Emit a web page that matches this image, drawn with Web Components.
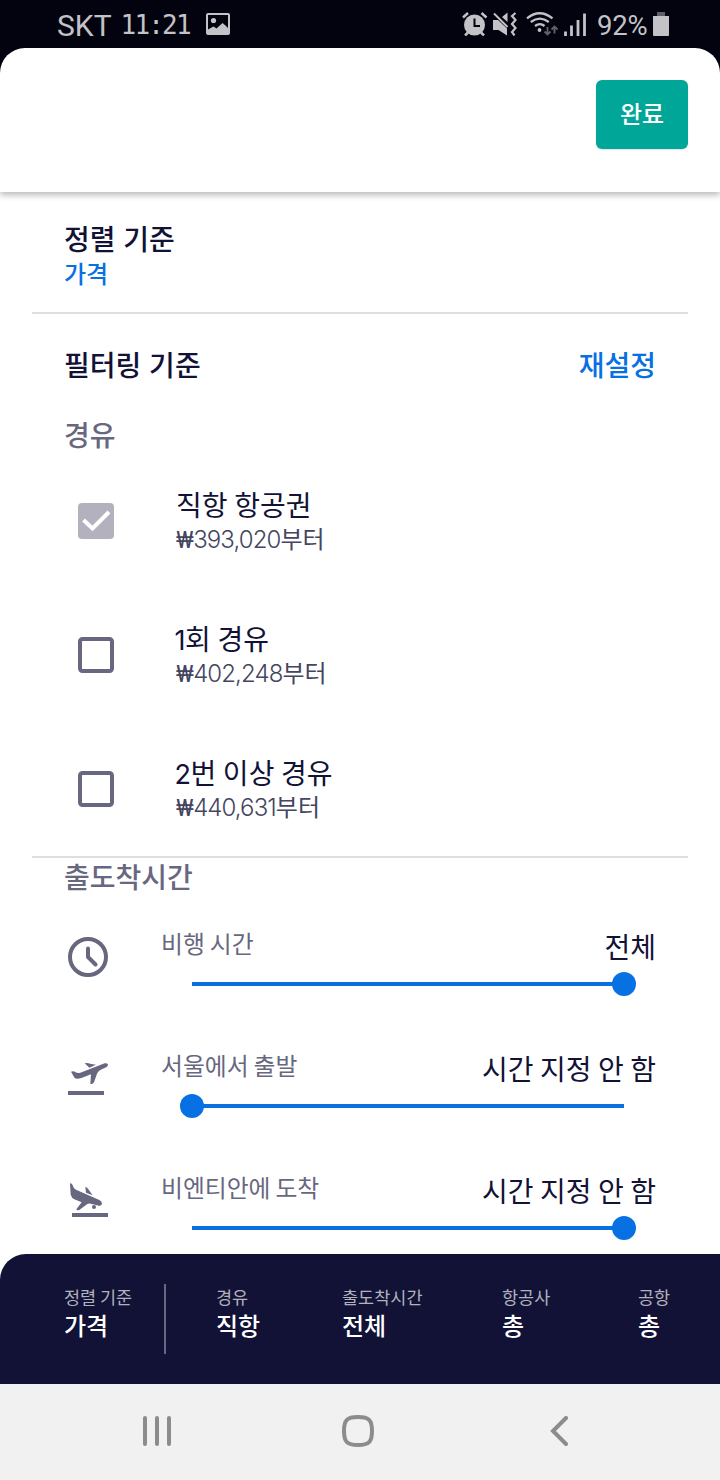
<!DOCTYPE html>
<html lang="ko">
<head>
<meta charset="utf-8">
<title>항공권 필터</title>
<style>
html,body{margin:0;padding:0}
body{width:720px;height:1480px;overflow:hidden;background:#02030f;font-family:"Noto Sans CJK KR","Liberation Sans",sans-serif;color:#111236}
</style>
</head>
<body>
<filter-screen></filter-screen>
<script>
function define(name, html) {
  const t = document.createElement('template');
  customElements.define(name, class extends HTMLElement {
    constructor() {
      super();
      t.innerHTML = typeof html === 'function' ? html(this) : html;
      this.attachShadow({mode: 'open'}).appendChild(t.content.cloneNode(true));
    }
  });
}

define('status-bar', `<style>
:host{display:flex;align-items:center;height:48px;box-sizing:border-box;padding:0 51px 0 57px;color:#c3c3c7;font:30px/48px Roboto,sans-serif}
svg{display:block;flex:none}
span{white-space:nowrap;height:48px;line-height:51px}
.time{font:26px/50px "DejaVu Sans Mono",monospace;letter-spacing:-1.8px;margin-left:9px;width:70px}
.pic{margin-left:15px;margin-right:auto}
.pct{font-size:27.5px;width:50px;margin:0 6px 0 9px;letter-spacing:-.2px}
</style>
<span>SKT</span><span class="time">11:21</span>
<svg class="pic" width="24" height="22" viewBox="0 0 24 22"><rect x="1" y="1" width="22" height="20" rx="1" fill="none" stroke="#c3c3c7" stroke-width="2"/><circle cx="7.5" cy="7.500" r="2.600" fill="#c3c3c7"/><path d="M1 18v-1l6.500-3.500 3 2 6-5.500 3 2.500 3.500 3.500v5H1z" fill="#c3c3c7"/></svg>
<svg width="126" height="24" viewBox="463 12 126 24" fill="none" stroke="#c3c3c7">
<circle cx="475.500" cy="25" r="10.500" fill="#c3c3c7" stroke="none"/><path d="M475.500 18.500v7.500h5.500" stroke="#02030f" stroke-width="2"/><path d="M464 17.500l5-4.500M487.500 17.500l-5-4.500M466 35.500l3-3M485 35.500l-3-3" stroke-width="2.500"/>
<path d="M494 20h5l9 8.500v7l-8.500-5.500H494zM503 17l5.500-4.500v9.500z" fill="#c3c3c7" stroke="none"/><path d="M495 13.500l13.500 13.500" stroke-width="2"/><path d="M516.500 13l-3.500 3 3.500 4-3.500 4 3.500 4-3.500 4 2.500 3.500" stroke-width="2.200"/>
<path d="M528 18.300q12.500-10 25.500 0M531.800 22q9-6.800 18 0M536 26q5-3.800 9.500 0" stroke-width="2.300"/><circle cx="540.500" cy="30" r="1.900" fill="#c3c3c7" stroke="none"/><path d="M548.500 27v7.500m-3-3l3 3 3-3M555.500 33.500v-7m-3 3l3-3 3 3" stroke="#606168" stroke-width="1.900"/>
<path d="M566.500 31.500V36M572.500 25.500V36M579 20V36M585.500 13.500V36" stroke-width="2.800"/></svg>
<span class="pct">92%</span>
<svg width="16" height="24" viewBox="0 0 16 24"><path d="M4 0h8v4H4z" fill="#5e5f66"/><path d="M0 4h16v19a1 1 0 0 1-1 1H1a1 1 0 0 1-1-1z" fill="#c3c3c7"/></svg>`);

define('action-button', `<style>
:host{display:flex;align-items:center;justify-content:center;width:92px;height:69px;border-radius:6px;background:#00a698;color:#fff;font-size:24px;line-height:66px;font-weight:500;box-shadow:0 1px 2px rgba(0,0,0,.12);padding-bottom:3px;box-sizing:border-box}
</style><slot></slot>`);

define('sheet-header', `<style>
:host{display:flex;justify-content:flex-end;box-sizing:border-box;height:144px;padding:32px 32px 0;background:#fff;border-radius:25px 25px 0 0;box-shadow:0 3px 6px rgba(0,0,0,.28);position:relative;z-index:1;clip-path:inset(0 0 -12px 0)}
</style><slot></slot>`);

define('section-line', `<style>:host{display:block;height:2px;background:#dfdfe1;margin:0 32px}</style>`);

define('stop-option', el => `<style>
:host{display:grid;grid-template-columns:36px 1fr;column-gap:62px;height:134px;padding-left:78px;align-items:start}
svg{margin-top:23px;display:block}
.t{font-size:28px;height:34px;line-height:48px;white-space:nowrap;word-spacing:-1.2px}
.p{font-size:24px;height:36px;line-height:48px;color:#444560;white-space:nowrap}
</style>
${el.hasAttribute('checked')
? '<svg width="36" height="36"><rect width="36" height="36" rx="4" fill="#b2b1bd"/><path d="M5.500 17l9 8.500L31 9" fill="none" stroke="#fff" stroke-width="4"/></svg>'
: '<svg width="36" height="36"><rect x="2" y="2" width="32" height="32" rx="2.500" fill="none" stroke="#686780" stroke-width="4"/></svg>'}
<div><div class="t"><slot></slot></div><div class="p"><slot name="price"></slot></div></div>`);

const ICONS = {
  clock: '<svg width="40" height="40" fill="none" stroke="#686780"><circle cx="20" cy="20" r="18" stroke-width="4"/><path d="M20 11.500V20l7.500 7.500" stroke-width="4" stroke-linecap="round" stroke-linejoin="round"/></svg>',
  takeoff: '<svg width="40" height="40" viewBox="54 417 120 120" fill="#686780"><path d="M54 513h108v12H54z"/><path d="M63 455q8-3 14 2 6 4 14 1l73-28q10-2 10 5-1 6-15 11-14 5-18 15l-9 26q-4 7-11 4l2-28-27 10q-16 6-22 1zM104 430q10-2 16 1 8 2 18 3l-20 9z"/></svg>',
  landing: '<svg width="40" height="40" viewBox="54 783 120 120" fill="#686780"><path d="M66 879h108v12H66z"/><circle cx="132" cy="861" r="6"/><path d="M60 790q7 0 8 6 2 10 10 13l70 31q8 4 8 11-1 7-9 6l-25-6q-6-2-13 3l-20 15q-7 4-10-1l16-21-22-9q-8-4-11-14zM106 801q5 0 8 5l14 20-20-8z"/></svg>'
};

define('time-slider', el => `<style>
:host{display:grid;grid-template-columns:93px 1fr;height:122px;padding:0 64px 0 68px;box-sizing:border-box}
svg{display:block;margin-top:17px}
.row{display:flex;justify-content:space-between;height:52px;white-space:nowrap}
.l{font-size:23.8px;line-height:46px;color:#686780;word-spacing:-1.7px}
.v{font-size:28px;line-height:52px;word-spacing:-1.4px}
.track{display:flex;align-items:center;justify-content:${el.getAttribute('at') === 'start' ? 'flex-start' : 'flex-end'};height:24px;margin:0 20px 0 19px}
.track{background:linear-gradient(#0a70e0,#0a70e0) center/calc(100% - 24px) 4px no-repeat}
i{width:24px;height:24px;border-radius:50%;background:#0770e3}
</style>
${ICONS[el.getAttribute('icon')]}
<div><div class="row"><span class="l"><slot></slot></span><span class="v"><slot name="value"></slot></span></div><div class="track"><i></i></div></div>`);

define('summary-item', `<style>
:host{display:block;white-space:nowrap}
.a{font-size:17.500px;height:26px;line-height:26px;color:#b2b1bd;word-spacing:-1.2px}
.b{font-size:24px;height:32px;line-height:30px;color:#fff;font-weight:500}
</style><div class="a"><slot name="label"></slot></div><div class="b"><slot></slot></div>`);

define('summary-bar', `<style>
:host{display:block;height:130px;background:#fff}
.bar{height:130px;box-sizing:border-box;background:#111236;border-radius:26px 0 0 0;display:grid;grid-template-columns:100px 52px 126px 160px 136px 82px;padding:30px 0 0 64px}
i{display:block;width:2px;height:70px;background:#686780}
</style><div class="bar">
<summary-item><span slot="label">정렬 기준</span>가격</summary-item><i></i>
<summary-item><span slot="label">경유</span>직항</summary-item>
<summary-item><span slot="label">출도착시간</span>전체</summary-item>
<summary-item><span slot="label">항공사</span>총</summary-item>
<summary-item><span slot="label">공항</span>총</summary-item></div>`);

define('nav-bar', `<style>
:host{display:grid;grid-template-columns:30px 32px 18px;column-gap:170px;justify-content:start;align-items:center;height:96px;padding:0 0 2px 142px;box-sizing:border-box;background:#f1f1f1}
svg{display:block;fill:none;stroke:#8c8c8c;stroke-width:4;stroke-linecap:round}
svg:last-child{margin-left:6px}
</style>
<svg width="30" height="30"><path d="M3 2v26M15 2v26M27 2v26"/></svg>
<svg width="32" height="32"><path d="M16 2C27 2 30 5 30 16S27 30 16 30 2 27 2 16 5 2 16 2z"/></svg>
<svg width="18" height="30"><path d="M16 2L3 15l13 13" stroke-linecap="round"/></svg>`);

define('filter-screen', `<style>
:host{display:flex;flex-direction:column;width:720px;height:1480px}
main{height:1062px;background:#fff;overflow:hidden}
.sort{height:120px;padding:25px 64px 0;box-sizing:border-box}
h2{margin:0;font-size:28px;line-height:42px;height:42px;font-weight:500;white-space:nowrap}
.sort p{margin:-5px 0 0;font-size:24px;line-height:38px;font-weight:500;color:#0770e3}
.head{display:flex;justify-content:space-between;padding:29px 64px 0}
.blue{color:#0770e3}
.grey{color:#686780}
.stops{margin:28px 64px 25px}
.times{margin:-3px 64px 23px}
.n{font-family:Inter,sans-serif;font-weight:350;letter-spacing:-.9px}
.w{font-family:Roboto,sans-serif;font-weight:400;letter-spacing:-.6px}
.d{font-family:Inter,sans-serif;font-weight:400;font-size:27px;margin-left:-1.500px;letter-spacing:-.5px}
</style>
<status-bar></status-bar>
<sheet-header><action-button>완료</action-button></sheet-header>
<main>
<div class="sort"><h2>정렬 기준</h2><p>가격</p></div>
<section-line></section-line>
<div class="head"><h2>필터링 기준</h2><h2 class="blue">재설정</h2></div>
<h2 class="grey stops">경유</h2>
<stop-option checked>직항 항공권<span slot="price"><span class="w">₩</span><span class="n">393,020</span>부터</span></stop-option>
<stop-option><span class="d">1</span>회 경유<span slot="price"><span class="w">₩</span><span class="n">402,248</span>부터</span></stop-option>
<stop-option style="height:108px"><span class="d">2</span>번 이상 경유<span slot="price"><span class="w">₩</span><span class="n">440,631</span>부터</span></stop-option>
<section-line></section-line>
<h2 class="grey times">출도착시간</h2>
<time-slider icon="clock" at="end">비행 시간<span slot="value">전체</span></time-slider>
<time-slider icon="takeoff" at="start">서울에서 출발<span slot="value">시간 지정 안 함</span></time-slider>
<time-slider icon="landing" at="end">비엔티안에 도착<span slot="value">시간 지정 안 함</span></time-slider>
</main>
<summary-bar></summary-bar>
<nav-bar></nav-bar>`);
</script>
</body>
</html>
